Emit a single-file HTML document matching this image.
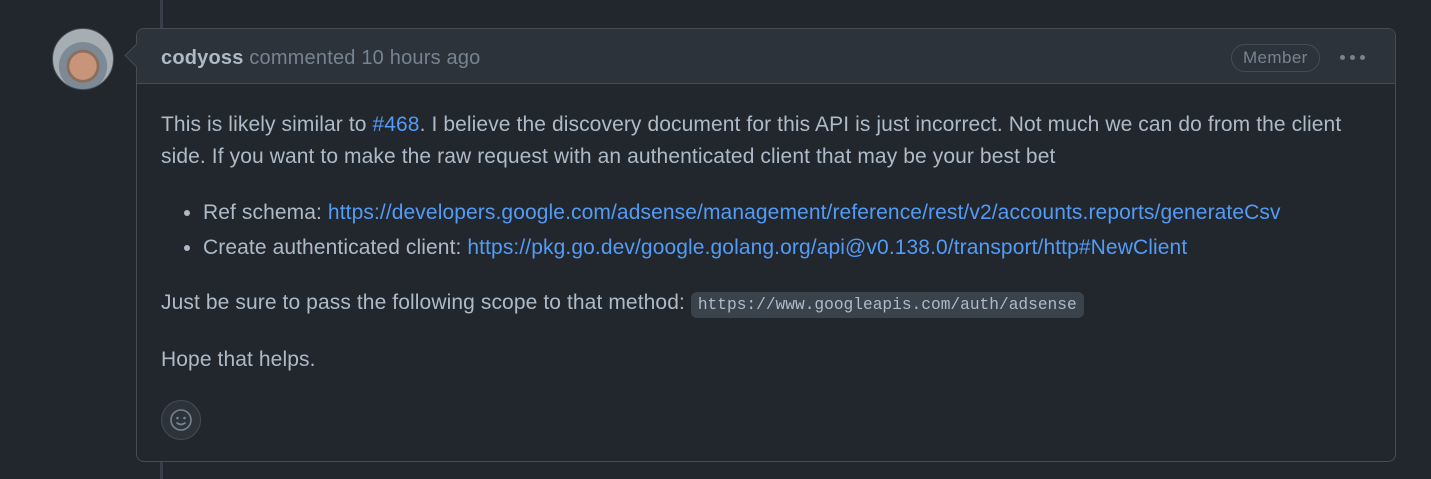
<!DOCTYPE html>
<html><head><style>
body{margin:0;width:1431px;height:479px;background:#22272e;font-family:"Liberation Sans",sans-serif;color:#adbac7;position:relative;overflow:hidden}
.line{position:absolute;left:160px;top:0;width:3px;height:479px;background:#373e47}
.av{position:absolute;left:52px;top:28px;width:60px;height:60px;border-radius:50%;background:radial-gradient(circle at 50% 62%,#c9957a 0 28%,#8a6f5c 29% 34%,#7d8a96 35% 50%,#a7aeb3 51%);border:1px solid #444c56}
.box{position:absolute;left:136px;top:28px;width:1258px;height:432px;border:1px solid #444c56;border-radius:8px;background:#22272e}
.hd{height:54px;background:#2d333b;border-bottom:1px solid #444c56;border-radius:8px 8px 0 0;position:relative}
.arrow{position:absolute;left:-9px;top:18px;width:16px;height:16px;background:#2d333b;border-left:1px solid #444c56;border-bottom:1px solid #444c56;transform:rotate(45deg)}
.ht{position:absolute;left:24px;top:18px;font-size:20px;color:#768390;letter-spacing:0.2px}
.ht b{color:#adbac7}
.mem{position:absolute;left:1094px;top:15px;height:26px;padding:0 11px;border:1px solid #444c56;border-radius:14px;font-size:17px;line-height:26px;color:#768390;letter-spacing:0.4px}
.dots{position:absolute;left:1203px;top:26px;display:flex;gap:5px}
.dots i{width:5px;height:5px;border-radius:50%;background:#768390}
.bd{padding:0 24px;font-size:21px;line-height:32px;letter-spacing:0.1px}
p{margin:0}
a{color:#539bf5;text-decoration:none}
ul{margin:22px 0 22px;padding-left:42px}
li{line-height:35px}
code{font-family:"Liberation Mono",monospace;font-size:16.2px;letter-spacing:0;background:#3a424c;padding:4px 7px;border-radius:6px}
.emo{position:absolute;left:24px;top:371px;width:38px;height:38px;border-radius:50%;background:#2d333b;border:1px solid #444c56}
</style></head><body>
<div class="line"></div>
<div class="av"></div>
<div class="box">
<div class="hd"><div class="arrow"></div>
<div class="ht"><b>codyoss</b> commented 10 hours ago</div>
<div class="mem">Member</div><div class="dots"><i></i><i></i><i></i></div></div>
<div class="bd">
<p style="margin-top:25px">This is likely similar to <a>#468</a>. I believe the discovery document for this API is just incorrect. Not much we can do from the client side. If you want to make the raw request with an authenticated client that may be your best bet</p>
<ul><li>Ref schema: <a>https://developers.google.com/adsense/management/reference/rest/v2/accounts.reports/generateCsv</a></li>
<li>Create authenticated client: <a>https://pkg.go.dev/google.golang.org/api@v0.138.0/transport/http#NewClient</a></li></ul>
<p>Just be sure to pass the following scope to that method: <code>https://www.googleapis.com/auth/adsense</code></p>
<p style="margin-top:23px">Hope that helps.</p>
</div>
<div class="emo"><svg width="38" height="38" viewBox="0 0 38 38"><circle cx="19" cy="19" r="10" fill="none" stroke="#768390" stroke-width="1.6"/><circle cx="15.5" cy="17" r="1.3" fill="#768390"/><circle cx="22.5" cy="17" r="1.3" fill="#768390"/><path d="M14.5 21.5q4.5 4 9 0" fill="none" stroke="#768390" stroke-width="1.6"/></svg></div>
</div>
</body></html>
